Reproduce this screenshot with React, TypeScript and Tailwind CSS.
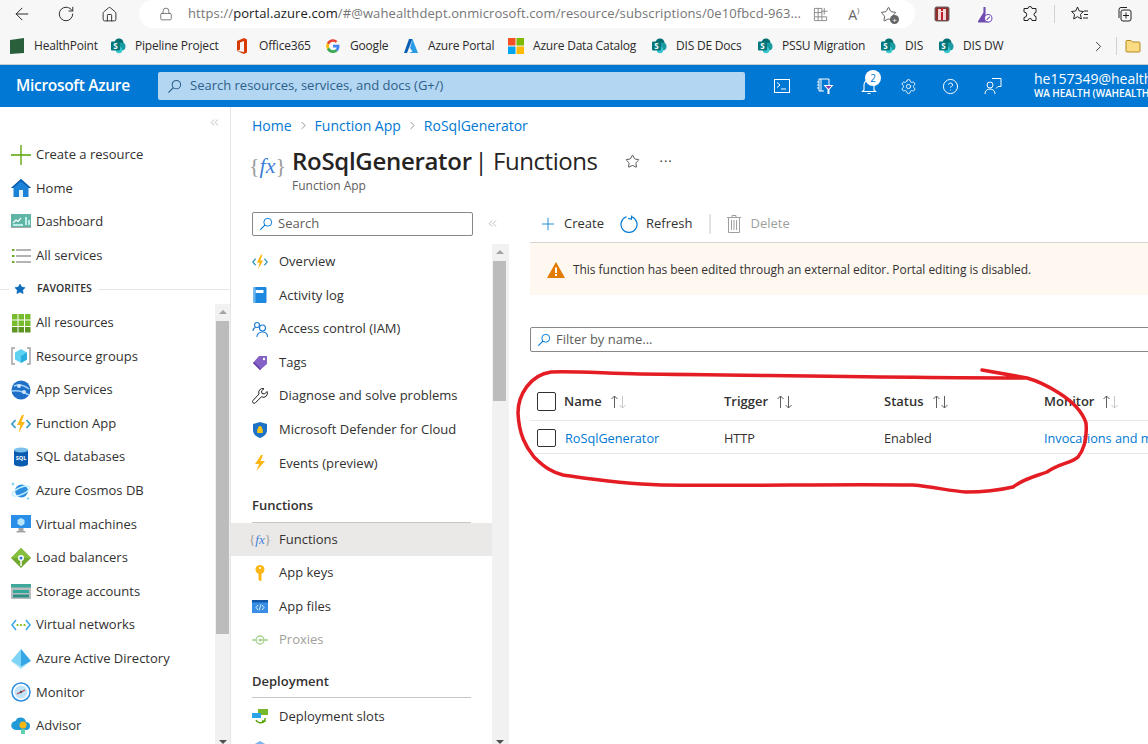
import React from 'react';
import { ArrowLeft, RotateCw, Home as HomeIcon, Lock, ChevronRight, Star, Settings, CircleHelp, Plus, ChevronsLeft } from 'lucide-react';

const ico = 'w-[20px] h-[20px] shrink-0';

const SpIcon = () => (
  <svg viewBox="0 0 16 16" className="w-[16px] h-[16px] shrink-0">
    <circle cx="9" cy="5" r="4.5" fill="#036c70" />
    <circle cx="11.5" cy="8.5" r="4" fill="#1a9ba1" />
    <circle cx="9" cy="12" r="3.2" fill="#37c6d0" />
    <rect x="1" y="3.5" width="9" height="9" rx="1" fill="#03787c" />
    <text x="5.5" y="11" fontSize="8" fontWeight="700" fill="#fff" textAnchor="middle" fontFamily="Open Sans">S</text>
  </svg>
);

const bookmarks: { label: string; w: number; icon: React.ReactNode }[] = [
  { label: 'HealthPoint', w: 101, icon: <svg viewBox="0 0 16 16" className="w-[16px] h-[16px] shrink-0"><path d="M1 2 15 0v15L1 16z" fill="#2a5f3c" /></svg> },
  { label: 'Pipeline Project', w: 124, icon: <SpIcon /> },
  { label: 'Office365', w: 91, icon: <svg viewBox="0 0 16 16" className="w-[16px] h-[16px] shrink-0"><path d="M3 3 10 0l3 1.5v13L10 16l-7-3 7 1V3L6 4.5v7L3 13z" fill="#d83b01" /></svg> },
  { label: 'Google', w: 78, icon: <svg viewBox="0 0 16 16" className="w-[16px] h-[16px] shrink-0"><path d="M14.5 8.2c0-.5 0-1-.1-1.4H8v2.7h3.7a3.200 3.200 0 0 1-1.400 2l2.200 1.700c1.300-1.200 2-3 2-5z" fill="#4285f4" /><path d="M8 15c1.900 0 3.400-.6 4.500-1.700l-2.200-1.700c-.6.400-1.400.7-2.300.7-1.800 0-3.300-1.200-3.800-2.800L1.900 11.200A7 7 0 0 0 8 15z" fill="#34a853" /><path d="M4.200 9.500a4 4 0 0 1 0-2.900L1.900 4.800a7 7 0 0 0 0 6.400z" fill="#fbbc05" /><path d="M8 3.800c1 0 1.900.3 2.600 1l1.900-1.900A7 7 0 0 0 1.900 4.800l2.300 1.800C4.700 5 6.200 3.800 8 3.800z" fill="#ea4335" /></svg> },
  { label: 'Azure Portal', w: 105, icon: <svg viewBox="0 0 16 16" className="w-[16px] h-[16px] shrink-0"><path d="M6 1h3.500L4 15H1z" fill="#0a5fb4" /><path d="M9.500 1 15 15H6l3.500-1.500L7 10z" fill="#2c9ce8" /></svg> },
  { label: 'Azure Data Catalog', w: 143, icon: <svg viewBox="0 0 16 16" className="w-[16px] h-[16px] shrink-0"><rect width="7.500" height="7.500" fill="#f25022" /><rect x="8.500" width="7.500" height="7.500" fill="#7fba00" /><rect y="8.500" width="7.500" height="7.500" fill="#00a4ef" /><rect x="8.500" y="8.500" width="7.500" height="7.500" fill="#ffb900" /></svg> },
  { label: 'DIS DE Docs', w: 106, icon: <SpIcon /> },
  { label: 'PSSU Migration', w: 123, icon: <SpIcon /> },
  { label: 'DIS', w: 58, icon: <SpIcon /> },
  { label: 'DIS DW', w: 70, icon: <SpIcon /> },
];

const I = {
  create: <svg viewBox="0 0 20 20" className={ico}><path d="M10 0v20M0 10h20" stroke="#57a300" strokeWidth="1.300" /></svg>,
  home: <svg viewBox="0 0 20 20" className={ico}><path d="M10 1 0 10h2.500v9h15v-9H20z" fill="#1b82d8" /><path d="M10 1 0 10h2L10 3l8 7h2z" fill="#0b5aa8" /><rect x="8" y="12" width="4" height="7" fill="#e6f1fa" /></svg>,
  dashboard: <svg viewBox="0 0 20 20" className={ico}><rect y="2" width="20" height="13" fill="#5fb5a6" /><path d="M2 11l3-3 2 1.500L10 6" stroke="#fff" fill="none" strokeWidth="1.200" /><path d="M2 13h10M15 5v8M18 8v5" stroke="#dff" strokeWidth="1.500" /><rect y="15" width="20" height="1" fill="#aaa" /></svg>,
  services: <svg viewBox="0 0 20 20" className={ico}><path d="M5 4h15M5 10h15M5 16h15" stroke="#9a9a9a" strokeWidth="1.500" /><path d="M1 3h2.500v2H1zM1 9h2.500v2H1zM1 15h2.500v2H1z" fill="#6fa82d" /></svg>,
  grid: <svg viewBox="0 0 20 20" className={ico}>{[1, 7.500, 14].flatMap((x) => [1, 7.500, 14].map((y) => <rect key={`${x}-${y}`} x={x} y={y} width="5.500" height="5.500" fill={y > 10 ? '#5e9624' : '#76bc2d'} />))}</svg>,
  groups: <svg viewBox="0 0 20 20" className={ico}><path d="M4 2H1v16h3M16 2h3v16h-3" stroke="#a0a1a2" fill="none" strokeWidth="1.500" /><path d="M10 3l6 3.500v7L10 17l-6-3.500v-7z" fill="#5ed2f2" /><path d="M10 10l6-3.500v7L10 17z" fill="#29b0e0" /></svg>,
  appservices: <svg viewBox="0 0 20 20" className={ico}><circle cx="10" cy="10" r="9.500" fill="#1f6fc9" /><path d="M3 6c5-2 10-1 15 3M1 11c5-1 12 1 17 4" stroke="#9fd0f7" fill="none" strokeWidth="1.500" /><circle cx="8" cy="6" r="2" fill="#cfe7fb" /><circle cx="13" cy="12" r="2" fill="#cfe7fb" /></svg>,
  func: <svg viewBox="0 0 20 20" className={ico}><path d="M4.500 6 1 10l3.500 4M15.500 6 19 10l-3.500 4" stroke="#3999c6" fill="none" strokeWidth="1.700" /><path d="M11 1 6 11h3.500L7.500 19 14 8h-3.500L13 1z" fill="#fcb714" /></svg>,
  sql: <svg viewBox="0 0 20 20" className={ico}><path d="M3 3v14c0 1.500 3 2.500 7 2.500s7-1 7-2.500V3z" fill="#0a5cb0" /><ellipse cx="10" cy="3" rx="7" ry="2.500" fill="#7cc1ec" /><text x="10" y="13" fontSize="5.500" fontWeight="700" fill="#fff" textAnchor="middle" fontFamily="Open Sans">SQL</text></svg>,
  cosmos: <svg viewBox="0 0 20 20" className={ico}><circle cx="10.500" cy="10" r="6.500" fill="#2d8fe0" /><ellipse cx="10" cy="10" rx="9.500" ry="3.500" transform="rotate(-25 10 10)" stroke="#c3f1ff" fill="none" strokeWidth="1.500" /><path d="M2 1l.6 1.400L4 3l-1.400.6L2 5l-.6-1.400L0 3l1.400-.6zM17 16l.5 1 1 .5-1 .5-.5 1-.5-1-1-.5 1-.5z" fill="#50c7e8" /></svg>,
  vm: <svg viewBox="0 0 20 20" className={ico}><rect y="1" width="20" height="13" fill="#2a8fe8" /><path d="M10 4l3.500 2v4L10 12l-3.500-2V6z" fill="#b7e6f8" /><path d="M7.500 14h5v3h2v1.500h-9V17h2z" fill="#a5a5a5" /></svg>,
  lb: <svg viewBox="0 0 20 20" className={ico}><path d="M10 0l10 10-10 10L0 10z" fill="#6fa82d" /><path d="M10 0l10 10H0z" fill="#86bf3d" /><circle cx="10" cy="10" r="3" fill="#fff" /><circle cx="10" cy="10" r="1.600" fill="#3f7fd8" /><path d="M10 13v5" stroke="#fff" strokeWidth="1.500" /></svg>,
  storage: <svg viewBox="0 0 20 20" className={ico}><rect y="2" width="20" height="15" fill="#b8bcbe" /><rect y="2" width="20" height="3.500" fill="#3fa89c" /><rect x="2" y="8" width="16" height="3" fill="#35a69a" /><rect x="2" y="12.500" width="16" height="3" fill="#2e8f85" /></svg>,
  vnet: <svg viewBox="0 0 20 20" className={ico}><path d="M5 5 1 10l4 5M15 5l4 5-4 5" stroke="#39a7e6" fill="none" strokeWidth="1.500" /><circle cx="6.500" cy="10" r="1.100" fill="#7fba00" /><circle cx="10" cy="10" r="1.100" fill="#7fba00" /><circle cx="13.500" cy="10" r="1.100" fill="#7fba00" /></svg>,
  aad: <svg viewBox="0 0 20 20" className={ico}><path d="M10 0 0 12l10 6z" fill="#7ed4f5" /><path d="M10 0l10 12-10 6z" fill="#36a6e6" /><path d="M0 12l10 6 10-6-10 8z" fill="#a8e2f8" /></svg>,
  monitor: <svg viewBox="0 0 20 20" className={ico}><circle cx="10" cy="10" r="9" fill="#fff" stroke="#2d8fe0" strokeWidth="1.500" /><circle cx="10" cy="10" r="6.500" fill="#bfe3f9" /><path d="M6 12l8-4" stroke="#c44" strokeWidth="1.300" /><circle cx="10" cy="10" r="1.200" fill="#555" /></svg>,
  advisor: <svg viewBox="0 0 20 20" className={ico}><path d="M5 14a4.500 4.500 0 0 1-.500-9 5.500 5.500 0 0 1 10.500 1 4 4 0 0 1 0 8z" fill="#1f9ad6" /><circle cx="12" cy="9" r="3.500" fill="#fcb714" /><path d="M10 13h4v5h-4z" fill="#5fd0b0" /></svg>,
  log: <svg viewBox="0 0 16 16" className="w-[16px] h-[16px] shrink-0"><rect x="1.500" width="13" height="16" rx="1" fill="#1e88e0" /><rect x="3.500" y="3" width="8" height="3" fill="#fff" /><rect x="1.500" width="2" height="16" fill="#68b5f0" /></svg>,
  iam: <svg viewBox="0 0 16 16" className="w-[16px] h-[16px] shrink-0"><circle cx="5" cy="4" r="2.500" stroke="#1679d4" fill="none" strokeWidth="1.100" /><circle cx="10.500" cy="7" r="3" stroke="#1679d4" fill="none" strokeWidth="1.100" /><path d="M1 10c0-2 1-3 2.500-3.500M5 16c0-3 2-5 5.500-5s5 2 5 5" stroke="#1679d4" fill="none" strokeWidth="1.100" /></svg>,
  tag: <svg viewBox="0 0 16 16" className="w-[16px] h-[16px] shrink-0"><path d="M7 1h8v8l-7 6-7-7z" fill="#8661c5" /><path d="M1 8l7 7 1-1-7-7z" fill="#5e3da6" /><circle cx="12" cy="4" r="1.200" fill="#fff" /></svg>,
  wrench: <svg viewBox="0 0 16 16" className="w-[16px] h-[16px] shrink-0"><path d="M15 3.500 12.500 6 10 5.500 9.500 3 12 .7A4 4 0 0 0 7 6L1 12.500a1.500 1.500 0 0 0 2.300 2.300L9.500 8.800A4 4 0 0 0 15 3.500z" stroke="#222" fill="#fff" strokeWidth="1" /></svg>,
  shield: <svg viewBox="0 0 16 16" className="w-[16px] h-[16px] shrink-0"><path d="M8 0l7 2v6c0 4-3 6.500-7 8-4-1.500-7-4-7-8V2z" fill="#1e72c8" /><path d="M8 4a2 2 0 0 1 2 2v1h.8v4H5.200V7H6V6a2 2 0 0 1 2-2z" fill="#f5c518" /></svg>,
  bolt: <svg viewBox="0 0 16 16" className="w-[16px] h-[16px] shrink-0"><path d="M9 0 3 9h4l-2.500 7L13 6H8.500L11 0z" fill="#fcb714" /></svg>,
  key: <svg viewBox="0 0 16 16" className="w-[16px] h-[16px] shrink-0"><circle cx="8" cy="4.500" r="4.500" fill="#fcb714" /><path d="M6.500 8h3v8H8l-1.500-1.500z" fill="#fcb714" /><circle cx="8" cy="3" r="1" fill="#fff" /></svg>,
  files: <svg viewBox="0 0 16 16" className="w-[16px] h-[16px] shrink-0"><rect y="1" width="16" height="13" fill="#3b8ee6" /><rect y="1" width="16" height="2.500" fill="#1258a8" /><path d="M6 6 4 8.500 6 11M10 6l2 2.500L10 11M8.800 5.500 7.200 11.500" stroke="#fff" fill="none" strokeWidth=".8" /></svg>,
  proxy: <svg viewBox="0 0 16 16" className="w-[16px] h-[16px] shrink-0"><circle cx="8" cy="8" r="4" stroke="#a9d18e" fill="none" strokeWidth="1.300" /><circle cx="8" cy="8" r="1.500" fill="#a9d18e" /><path d="M0 8h5M8 8h8" stroke="#a9d18e" strokeWidth="1.300" /></svg>,
  slots: <svg viewBox="0 0 16 16" className="w-[16px] h-[16px] shrink-0"><rect x="6" width="10" height="6" fill="#76b82a" /><rect y="4" width="9" height="5" fill="#2aa3e8" /><path d="M4 11c1 3 6 4 9 1M13 9v3h-3" stroke="#57a300" fill="none" strokeWidth="1.400" /></svg>,
  next: <svg viewBox="0 0 16 16" className="w-[16px] h-[16px] shrink-0"><path d="M8 0l7 4v12H1V4z" fill="#7db4ec" /></svg>,
};

const Lens = ({ className }: { className: string }) => (
  <svg viewBox="0 0 16 16" className={`shrink-0 ${className}`}>
    <circle cx="10" cy="6" r="4.500" stroke="currentColor" fill="none" strokeWidth="1.100" />
    <path d="M6.800 9.200 1.500 14.500" stroke="currentColor" strokeWidth="1.300" />
  </svg>
);

const FxIcon = ({ small }: { small?: boolean }) => (
  <span className={small ? 'w-[16px] shrink-0 flex items-center justify-center text-[13px] leading-none' : 'w-[31px] shrink-0 flex items-center justify-center text-[22px] leading-none'} style={{ fontFamily: '"Liberation Serif", serif' }}>
    <span className="text-[#9a9a9a]">{'{'}</span>
    <span className="italic text-[#3f7fd8]">fx</span>
    <span className="text-[#9a9a9a]">{'}'}</span>
  </span>
);

const leftTop = [
  { label: 'Create a resource', icon: I.create },
  { label: 'Home', icon: I.home },
  { label: 'Dashboard', icon: I.dashboard },
  { label: 'All services', icon: I.services },
];

const leftFav = [
  { label: 'All resources', icon: I.grid },
  { label: 'Resource groups', icon: I.groups },
  { label: 'App Services', icon: I.appservices },
  { label: 'Function App', icon: I.func },
  { label: 'SQL databases', icon: I.sql },
  { label: 'Azure Cosmos DB', icon: I.cosmos },
  { label: 'Virtual machines', icon: I.vm },
  { label: 'Load balancers', icon: I.lb },
  { label: 'Storage accounts', icon: I.storage },
  { label: 'Virtual networks', icon: I.vnet },
  { label: 'Azure Active Directory', icon: I.aad },
  { label: 'Monitor', icon: I.monitor },
  { label: 'Advisor', icon: I.advisor },
];

const LeftRow = ({ label, icon }: { label: string; icon: React.ReactNode }) => (
  <div className="h-[33.6px] shrink-0 pl-[11px] flex items-center gap-[5px] text-[13px] text-[#323130]">
    {icon}
    <span className="whitespace-nowrap">{label}</span>
  </div>
);

const MenuRow = ({ label, icon, active, muted, nudge }: { label?: string; icon: React.ReactNode; active?: boolean; muted?: boolean; nudge?: boolean }) => (
  <div className={`h-[33.6px] shrink-0 pl-[21px] flex items-center gap-[11px] text-[13px] ${nudge ? 'pt-[3px]' : ''} ${active ? 'bg-[#ebe9e7]' : ''} ${muted ? 'text-[#a19f9d]' : 'text-[#323130]'}`}>
    {icon}
    {label && <span className="whitespace-nowrap">{label}</span>}
  </div>
);

const MenuHeading = ({ label, h }: { label: string; h: string }) => (
  <div className={`${h} shrink-0 mx-[21px] w-[219px] border-b border-[#c8c6c4] pb-[6px] flex items-end text-[13px] font-semibold text-[#323130]`}>{label}</div>
);

const Scrollbar = ({ top, height, className }: { top: number; height: number; className: string }) => (
  <div className={`bg-[#f1f1f1] relative shrink-0 ${className}`}>
    <div className="absolute left-[4px] top-[6px] w-0 h-0 border-x-[4px] border-x-transparent border-b-[4px] border-b-[#a3a3a3]" />
    <div className="absolute left-[1px] w-[13px] bg-[#bcbcbc]" style={{ top, height }} />
    <div className="absolute left-[4px] bottom-[0px] w-0 h-0 border-x-[4px] border-x-transparent border-t-[4px] border-t-[#505050]" />
  </div>
);

const SortArrows = ({ strong }: { strong?: boolean }) => (
  <svg viewBox="0 0 18 14" className="w-[18px] h-[14px] ml-[8px] shrink-0">
    <path d="M4.500 13V1M1.500 4l3-3 3 3" stroke="#605e5c" fill="none" strokeWidth="1" />
    <path d="M12.500 1v12M9.500 10l3 3 3-3" stroke={strong ? '#605e5c' : '#c8c6c4'} fill="none" strokeWidth="1" />
  </svg>
);

const Checkbox = ({ h }: { h: string }) => <span className={`w-[19px] ${h} border border-[#323130] rounded-[2px] bg-white shrink-0`} />;

export default function App() {
  return (
    <div className="relative w-[1148px] h-[744px] overflow-hidden bg-white flex flex-col" style={{ fontFamily: '"Open Sans", "Liberation Sans", sans-serif' }}>
      {/* browser chrome */}
      <div className="h-[65px] shrink-0 bg-[#f7f7f7] border-b border-[#c9c9c9] flex flex-col">
        <div className="h-[32px] shrink-0 flex items-start">
          <div className="w-[139px] shrink-0 h-[28px] flex items-center text-[#2b2b2b]">
            <ArrowLeft className="ml-[12px] w-[20px] h-[20px]" strokeWidth={1.2} />
            <RotateCw className="ml-[25px] w-[18px] h-[18px]" strokeWidth={1.3} />
            <HomeIcon className="ml-[26px] w-[17px] h-[17px]" strokeWidth={1.3} />
          </div>
          <div className="w-[776px] shrink-0 h-[28px] bg-white rounded-full pl-[20px] flex items-center text-[13px] tracking-[0.1px] whitespace-nowrap">
            <Lock className="w-[14px] h-[14px] text-[#555]" strokeWidth={1.3} />
            <span className="ml-[15px] text-[#767676]">https://</span>
            <span className="text-[#1b1b1b]">portal.azure.com</span>
            <span className="text-[#767676]">/#@wahealthdept.onmicrosoft.com/resource/subscriptions/0e10fbcd-963...</span>
            <svg viewBox="0 0 16 16" className="w-[15px] h-[15px] ml-[12px] shrink-0"><path d="M1.500 1.500h8v13h-8zM1.500 6h8M1.500 10.500h8M5.500 1.500v13M9.500 10.500h5v4h-5M12 1v7M8.500 4.500H15.500" stroke="#888" fill="none" strokeWidth="1" /></svg>
            <span className="ml-[20px] text-[14px] text-[#666] w-[20px] shrink-0">A<span className="text-[8px] align-top">)</span></span>
            <span className="relative ml-[12px] shrink-0">
              <Star className="w-[17px] h-[17px] text-[#444]" strokeWidth={1.2} />
              <span className="absolute -right-[2px] -bottom-[1px] w-[9px] h-[9px] rounded-full bg-[#666] text-white text-[8px] leading-[9px] text-center">+</span>
            </span>
          </div>
          <div className="flex-1 h-[28px] flex items-center">
            <svg viewBox="0 0 16 16" className="w-[16px] h-[16px] ml-[19px] shrink-0"><rect x="1" y="1" width="14" height="14" rx="1.500" fill="#8f2d2d" stroke="#666" /><rect x="4" y="3" width="8" height="11" fill="#f0d8d8" /><path d="M7 2h2v3H7zM7 6h2v8H7z" fill="#c41e2a" /></svg>
            <svg viewBox="0 0 16 16" className="w-[17px] h-[17px] ml-[26px] shrink-0"><path d="M6 1h4M7 1v5L2 14c-.5 1 0 1.500 1 1.500h9L9 10V1z" fill="#6f4bb2" /><circle cx="11.500" cy="11.500" r="3.500" fill="#fff" stroke="#6f4bb2" /><path d="M10 13l3-3" stroke="#6f4bb2" /></svg>
            <svg viewBox="0 0 16 16" className="w-[16px] h-[16px] ml-[29px] shrink-0"><path d="M6 2.500a2 2 0 0 1 4 0h4v4a2 2 0 0 0 0 4v4h-4a2 2 0 0 0-4 0H2v-3a2 2 0 0 0 0-5.500V2.500z" stroke="#222" fill="none" /></svg>
            <span className="w-px h-[18px] bg-[#d2d2d2] ml-[16px]" />
            <svg viewBox="0 0 18 16" className="w-[18px] h-[16px] ml-[16px] shrink-0"><path d="M6.500 1 8.300 5 12.500 5.500 9.500 8.300 10.300 13 6.500 10.700 2.700 13 3.500 8.300.5 5.500 4.700 5z" stroke="#222" fill="none" /><path d="M13 5h4M13 8.500h4M12 12h5" stroke="#222" /></svg>
            <svg viewBox="0 0 16 16" className="w-[16px] h-[16px] ml-[27px] shrink-0"><path d="M3 12V3.500A2 2 0 0 1 5 1.500h6" stroke="#222" fill="none" /><rect x="5" y="4" width="10" height="11" rx="2" stroke="#222" fill="none" /><path d="M10 6.500v6M7 9.500h6" stroke="#222" /></svg>
          </div>
        </div>
        <div className="h-[28px] shrink-0 pl-[9px] flex items-center text-[12px] text-[#2b2b2b]">
          {bookmarks.map((b) => (
            <div key={b.label} className="flex items-center gap-[9px] whitespace-nowrap shrink-0" style={{ width: b.w }}>
              {b.icon}
              <span className="tracking-[-0.2px]">{b.label}</span>
            </div>
          ))}
          <ChevronRight className="w-[17px] h-[17px] ml-[82px] text-[#333] shrink-0" strokeWidth={1.3} />
          <span className="w-px h-[18px] bg-[#d2d2d2] ml-[9px]" />
          <svg viewBox="0 0 16 14" className="w-[16px] h-[14px] ml-[8px] shrink-0"><path d="M1 2.500A1 1 0 0 1 2 1.500h4l1.500 1.500H14a1 1 0 0 1 1 1V12a1 1 0 0 1-1 1H2a1 1 0 0 1-1-1z" fill="#fbdc82" stroke="#b58a22" /></svg>
        </div>
      </div>

      {/* azure top bar */}
      <div className="h-[42px] shrink-0 bg-[#0078d4] flex items-center text-white">
        <div className="w-[158px] shrink-0 pl-[16px] text-[15.5px] font-semibold tracking-[-0.3px] whitespace-nowrap">Microsoft Azure</div>
        <div className="w-[587px] shrink-0 h-[28px] rounded-[2px] bg-[#b3d6f2] flex items-center pl-[9px] text-[13px] text-[#2c5f8a] whitespace-nowrap">
          <Lens className="w-[15px] h-[15px]" />
          <span className="ml-[8px]">Search resources, services, and docs (G+/)</span>
        </div>
        <div className="w-[289px] pl-[29px] flex items-center shrink-0">
          <svg viewBox="0 0 16 14" className="w-[16px] h-[14px] shrink-0"><rect x=".5" y=".5" width="15" height="13" stroke="#fff" fill="none" /><path d="M3 3.500l3 2.500-3 2.500M7 10h5" stroke="#fff" fill="none" /></svg>
          <svg viewBox="0 0 18 18" className="w-[18px] h-[18px] ml-[26px] shrink-0"><path d="M5 2h8v6M5 2H3v12h5M3 5H1M3 8H1M3 11H1M5 2v12" stroke="#fff" fill="none" /><path d="M7.500 8h10l-4 4.500V17h-2v-4.500z" fill="#fff" /><path d="M9.500 9h6l-3 3z" fill="#8a3ca8" /></svg>
          <span className="relative ml-[27px] w-[16px] h-[16px] shrink-0">
            <svg viewBox="0 0 16 16" className="w-[16px] h-[16px]"><path d="M3 12V7a5 5 0 0 1 10 0v5l1.500 1.500h-13zM6.500 15.500h3" stroke="#fff" fill="none" strokeWidth="1.100" /></svg>
            <span className="absolute left-[4px] -top-[8px] w-[16px] h-[16px] rounded-full bg-white text-[#0078d4] text-[10px] leading-[16px] text-center">2</span>
          </span>
          <Settings className="w-[17px] h-[17px] ml-[23px] shrink-0" strokeWidth={1.3} />
          <CircleHelp className="w-[17px] h-[17px] ml-[25px] shrink-0" strokeWidth={1.4} />
          <svg viewBox="0 0 18 18" className="w-[18px] h-[18px] ml-[25px] shrink-0"><path d="M8 1.500h9v8h-3l-2 2" stroke="#fff" fill="none" /><circle cx="6" cy="8" r="3" stroke="#fff" fill="none" /><path d="M1 17c0-3 2-5 5-5s5 2 5 5" stroke="#fff" fill="none" /></svg>
        </div>
        <div className="flex flex-col whitespace-nowrap">
          <span className="text-[14px] leading-[17px] -mt-[2px]">he157349@healthwa</span>
          <span className="text-[10px] leading-[13px] font-semibold tracking-[-0.1px]">WA HEALTH (WAHEALTHDEPT)</span>
        </div>
      </div>

      <div className="flex-1 min-h-0 flex">
        {/* portal sidebar */}
        <div className="w-[231px] shrink-0 flex flex-col border-r border-[#e6e6e6]">
          <div className="h-[31px] shrink-0 flex justify-end items-start pr-[9px] pt-[9px] text-[#8a8886]">
            <ChevronsLeft className="w-[13px] h-[13px]" strokeWidth={1} />
          </div>
          {leftTop.map((r) => <LeftRow key={r.label} {...r} />)}
          <div className="h-[33.6px] shrink-0 flex items-center text-[10.5px] font-semibold text-[#323130]">
            <span className="w-[9px] h-px bg-[#e6e6e6]" />
            <Star className="w-[12px] h-[12px] ml-[5px] fill-[#0f6cbd] text-[#0f6cbd]" strokeWidth={1} />
            <span className="ml-[11px] whitespace-nowrap">FAVORITES</span>
            <span className="flex-1 h-px bg-[#e6e6e6] ml-[6px]" />
          </div>
          <div className="flex-1 min-h-0 flex">
            <div className="flex-1 min-w-0 flex flex-col overflow-hidden">
              {leftFav.map((r) => <LeftRow key={r.label} {...r} />)}
            </div>
            <Scrollbar className="w-[15px] -mt-[2px]" top={17} height={313} />
          </div>
        </div>

        {/* blade */}
        <div className="flex-1 min-w-0 flex flex-col">
          <div className="h-[38px] shrink-0 pl-[21px] pb-[2px] flex items-center text-[14px] text-[#0078d4] whitespace-nowrap">
            <span>Home</span>
            <ChevronRight className="w-[13px] h-[13px] mx-[5px] text-[#605e5c]" strokeWidth={1.2} />
            <span>Function App</span>
            <ChevronRight className="w-[13px] h-[13px] mx-[5px] text-[#605e5c]" strokeWidth={1.2} />
            <span>RoSqlGenerator</span>
          </div>
          <div className="h-[60px] shrink-0 pl-[21px] flex items-start">
            <div className="mt-[10px]"><FxIcon /></div>
            <div className="ml-[9px] flex flex-col">
              <div className="flex items-center text-[24px] leading-[32px] text-[#252423] whitespace-nowrap">
                <span className="font-semibold tracking-[-0.3px]">RoSqlGenerator</span>
                <span className="-ml-[3px] tracking-[-0.45px]">&nbsp;| Functions</span>
                <Star className="w-[15px] h-[15px] ml-[28px] text-[#323130]" strokeWidth={1.3} />
                <span className="ml-[19px] text-[13px] tracking-[1px] text-[#323130]">···</span>
              </div>
              <span className="text-[12px] leading-[14px] mt-[2px] text-[#605e5c]">Function App</span>
            </div>
          </div>
          <div className="flex-1 min-h-0 flex">
            {/* resource menu */}
            <div className="w-[278px] shrink-0 flex flex-col">
              <div className="h-[39px] shrink-0 pl-[21px] pb-[2px] flex items-center">
                <div className="w-[221px] h-[24px] border border-[#8a8886] rounded-[2px] flex items-center pl-[6px] text-[13px] text-[#605e5c]">
                  <Lens className="w-[14px] h-[14px] text-[#0078d4]" />
                  <span className="ml-[5px]">Search</span>
                </div>
                <ChevronsLeft className="w-[13px] h-[13px] ml-[13px] text-[#8a8886]" strokeWidth={1} />
              </div>
              <div className="flex-1 min-h-0 flex">
                <div className="w-[261px] shrink-0 flex flex-col overflow-hidden pt-[1px]">
                  <MenuRow label="Overview" icon={<span className="w-[16px] h-[16px] shrink-0 [&>svg]:w-[16px] [&>svg]:h-[16px] flex">{I.func}</span>} />
                  <MenuRow label="Activity log" icon={I.log} />
                  <MenuRow label="Access control (IAM)" icon={I.iam} />
                  <MenuRow label="Tags" icon={I.tag} />
                  <MenuRow label="Diagnose and solve problems" icon={I.wrench} />
                  <MenuRow label="Microsoft Defender for Cloud" icon={I.shield} />
                  <MenuRow label="Events (preview)" icon={I.bolt} />
                  <MenuHeading label="Functions" h="h-[42.4px]" />
                  <MenuRow label="Functions" icon={<FxIcon small />} active />
                  <MenuRow label="App keys" icon={I.key} />
                  <MenuRow label="App files" icon={I.files} />
                  <MenuRow label="Proxies" icon={I.proxy} muted />
                  <MenuHeading label="Deployment" h="h-[41.4px]" />
                  <MenuRow label="Deployment slots" icon={I.slots} nudge />
                  <MenuRow icon={I.next} />
                </div>
                <Scrollbar className="w-[17px]" top={17} height={140} />
              </div>
            </div>

            {/* functions list */}
            <div className="flex-1 min-w-0 pl-[21px] flex flex-col overflow-hidden">
              <div className="h-[36px] shrink-0 mt-[2px] pb-[2px] border-b border-[#d6d6d6] flex items-center pl-[8px] text-[13px] text-[#323130] whitespace-nowrap">
                <Plus className="w-[20px] h-[20px] text-[#0078d4]" strokeWidth={1} />
                <span className="ml-[6px]">Create</span>
                <svg viewBox="0 0 18 18" className="w-[18px] h-[18px] ml-[16px] shrink-0"><path d="M6.500 1.800A8 8 0 1 0 11.500 1.800M11.700.5l-.4 3.800-3.300-1" stroke="#0078d4" fill="none" strokeWidth="1.200" /></svg>
                <span className="ml-[8px]">Refresh</span>
                <span className="w-[2px] h-[20px] bg-[#e4e4e4] ml-[17px]" />
                <svg viewBox="0 0 14 18" className="w-[14px] h-[18px] ml-[16px] shrink-0"><path d="M5 2V.5h4V2M0 2.500h14M1.500 2.500v15h11v-15M4.500 5v10M7 5v10M9.500 5v10" stroke="#a19f9d" fill="none" /></svg>
                <span className="ml-[9px] text-[#a19f9d]">Delete</span>
              </div>
              <div className="h-[52px] shrink-0 bg-[#fff8f0] pt-[2px] flex items-center pl-[17px] text-[12px] text-[#323130] whitespace-nowrap">
                <svg viewBox="0 0 18 16" className="w-[18px] h-[16px] shrink-0"><path d="M9 0l9 16H0z" fill="#e27b00" /><path d="M8 5.500h2V11H8zM8 12h2v2H8z" fill="#fff" /></svg>
                <span className="ml-[8px] tracking-[-0.05px]">This function has been edited through an external editor. Portal editing is disabled.</span>
              </div>
              <div className="h-[25px] shrink-0 mt-[32px] w-[700px] border border-[#8a8886] rounded-[2px] flex items-center pl-[6px] text-[13px] text-[#605e5c]">
                <Lens className="w-[14px] h-[14px] text-[#0078d4]" />
                <span className="ml-[5px]">Filter by name...</span>
              </div>
              <div className="h-[44px] mt-[25px] pt-[6px] shrink-0 w-[700px] border-b border-[#e8e8e8] flex items-center text-[13px] font-semibold text-[#323130] whitespace-nowrap">
                <div className="w-[194px] pl-[7px] flex items-center">
                  <Checkbox h="h-[19px]" />
                  <span className="ml-[8px]">Name</span><SortArrows />
                </div>
                <div className="w-[160px] flex items-center">Trigger<SortArrows strong /></div>
                <div className="w-[160px] flex items-center">Status<SortArrows strong /></div>
                <div className="w-[160px] flex items-center">Monitor<SortArrows /></div>
              </div>
              <div className="h-[33px] shrink-0 pt-[3px] w-[700px] border-b border-[#e8e8e8] flex items-center text-[12.7px] text-[#323130] whitespace-nowrap">
                <div className="w-[194px] pl-[7px] flex items-center">
                  <Checkbox h="h-[18px]" />
                  <span className="ml-[9px] text-[#0078d4]">RoSqlGenerator</span>
                </div>
                <div className="w-[160px]">HTTP</div>
                <div className="w-[160px]">Enabled</div>
                <div className="w-[160px] text-[#0078d4]">Invocations and more</div>
              </div>
            </div>
          </div>
        </div>
      </div>

      {/* hand-drawn annotation */}
      <svg viewBox="0 0 1148 744" className="absolute inset-0 w-[1148px] h-[744px] pointer-events-none">
        <path d="M982 370 1027 378C900 378 750 375 640 374C600 373 570 371 551 372C530 375 518 395 518 413C519 435 526 447 534 457C545 468 552 472 563 475C590 479 620 484 661 485C740 486 840 484 913 485C935 487 950 491 966 492C985 492 1000 490 1013 487C1025 478 1037 476 1047 472C1060 463 1072 463 1078 457C1086 447 1087 435 1086 423C1082 410 1070 400 1059 393C1048 386 1038 381 1027 378" stroke="#e41c23" strokeWidth="3.500" fill="none" strokeLinecap="round" />
      </svg>
    </div>
  );
}
